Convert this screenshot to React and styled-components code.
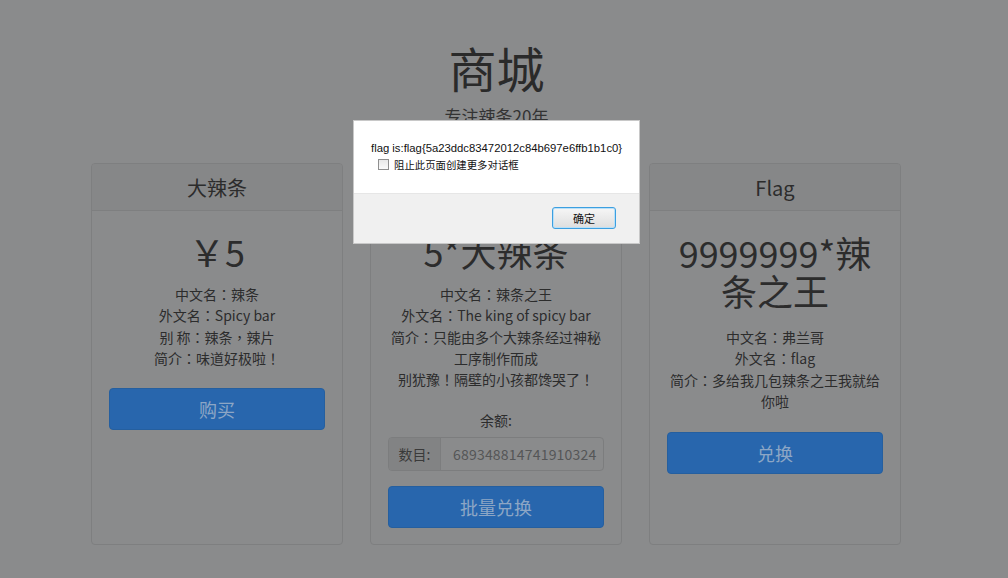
import React from "react";
import styled, { createGlobalStyle } from "styled-components";

const Global = createGlobalStyle`
  html, body { margin: 0; padding: 0; }
  body {
    background: #8a8b8c;
    width: 1008px;
    height: 578px;
    overflow: hidden;
    font-family: "Noto Sans CJK SC", "Noto Sans", sans-serif;
    color: #2c2c2c;
  }
`;

const Page = styled.div`
  position: relative;
  width: 1008px;
  height: 578px;
`;

const Container = styled.div`
  width: 811px;
  margin-left: 91px;
  display: flex;
  flex-direction: column;
  align-items: center;
`;

const Title = styled.h1`
  margin: 41px 0 0;
  font-size: 48px;
  font-weight: 400;
  line-height: 53px;
  color: #2a2a2a;
`;

const Subtitle = styled.p`
  margin: 11px 0 0;
  font-size: 17px;
  line-height: 22px;
  color: #333;
`;

const Grid = styled.div`
  width: 100%;
  margin-top: 36px;
  display: grid;
  grid-template-columns: repeat(3, 252px);
  column-gap: 27px;
`;

const Card = styled.div`
  height: 382px;
  box-sizing: border-box;
  border: 1px solid #7e7f80;
  border-radius: 4px;
  display: flex;
  flex-direction: column;
  overflow: hidden;
`;

const CardHeader = styled.div`
  height: 47px;
  box-sizing: border-box;
  border-bottom: 1px solid #7e7f80;
  background: #868788;
  display: flex;
  align-items: center;
  justify-content: center;
  font-size: 20px;
  color: #2c2c2c;
`;

const CardBody = styled.div`
  padding: 0 17px;
  display: flex;
  flex-direction: column;
  align-items: stretch;
  text-align: center;
`;

const Price = styled.div`
  margin: ${(p) => p.$top || 20}px 0 ${(p) => p.$bottom || 13}px;
  font-size: 36px;
  line-height: ${(p) => p.$lh || 40}px;
  color: #2c2c2c;
`;

const Info = styled.div`
  font-size: 14px;
  line-height: 21.3px;
  color: #2c2c2c;
`;

const P = styled.span`
  font-family: "Noto Sans CJK TC", "Noto Sans CJK SC", sans-serif;
`;

const Balance = styled.div`
  margin-top: 20px;
  font-size: 14px;
  line-height: 21px;
  color: #2c2c2c;
`;

const InputGroup = styled.div`
  margin-top: 6px;
  height: 34px;
  box-sizing: border-box;
  display: flex;
  border: 1px solid #7c7d7e;
  border-radius: 4px;
  overflow: hidden;
  font-size: 14px;
`;

const Addon = styled.div`
  width: 51px;
  flex: none;
  background: #828384;
  border-right: 1px solid #7c7d7e;
  display: flex;
  align-items: center;
  justify-content: center;
  color: #3a3a3a;
`;

const InputValue = styled.div`
  flex: 1;
  display: flex;
  align-items: center;
  padding-left: 12px;
  color: #555657;
  letter-spacing: 0.2px;
`;

const Button = styled.div`
  margin-top: ${(p) => p.$top}px;
  height: 42px;
  border-radius: 4px;
  background: #2866ad;
  border: 1px solid #255f9f;
  box-sizing: border-box;
  display: flex;
  align-items: center;
  justify-content: center;
  font-size: 18px;
  color: #8da6c5;
`;

const Dialog = styled.div`
  position: absolute;
  left: 353px;
  top: 120px;
  width: 287px;
  height: 124px;
  box-sizing: border-box;
  border: 1px solid #c8c8c8;
  background: #f0f0f0;
  display: flex;
  flex-direction: column;
  font-family: "Liberation Sans", "Noto Sans CJK SC", sans-serif;
`;

const DialogTop = styled.div`
  height: 72px;
  background: #ffffff;
  padding: 20px 0 0 17px;
  box-sizing: border-box;
`;

const Message = styled.div`
  font-size: 11.3px;
  line-height: 14px;
  color: #111;
`;

const CheckRow = styled.div`
  margin-top: 2px;
  margin-left: 7px;
  display: flex;
  align-items: center;
  gap: 5px;
  font-size: 10.4px;
  color: #111;
  font-family: "Noto Sans CJK SC", sans-serif;
`;

const Box = styled.span`
  width: 9px;
  height: 9px;
  border: 1px solid #8f8f8f;
  background: linear-gradient(#e8e8e8, #fafafa);
  display: inline-block;
`;

const DialogBottom = styled.div`
  flex: 1;
  display: flex;
  justify-content: flex-end;
  align-items: flex-start;
  padding: 13px 23px 0 0;
  border-top: 1px solid #e6e6e6;
`;

const OkButton = styled.div`
  width: 64px;
  height: 22px;
  box-sizing: border-box;
  border: 1px solid #3c9fe0;
  border-radius: 3px;
  background: linear-gradient(#f6f6f6, #dedede);
  box-shadow: inset 0 0 0 1px #b9e0f8;
  display: flex;
  align-items: center;
  justify-content: center;
  font-family: "Noto Sans CJK SC", sans-serif;
  font-size: 11px;
  color: #111;
`;

export default function App() {
  return (
    <Page>
      <Global />
      <Container>
        <Title>商城</Title>
        <Subtitle>专注辣条20年</Subtitle>
        <Grid>
          <Card>
            <CardHeader>大辣条</CardHeader>
            <CardBody>
              <Price>￥5</Price>
              <Info>
                中文名<P>：</P>辣条<br />
                外文名<P>：</P>Spicy bar<br />
                别 称<P>：</P>辣条<P>，</P>辣片<br />
                简介<P>：</P>味道好极啦<P>！</P>
              </Info>
              <Button $top={19}>购买</Button>
            </CardBody>
          </Card>
          <Card>
            <CardHeader>辣条之王</CardHeader>
            <CardBody>
              <Price>5*大辣条</Price>
              <Info>
                中文名<P>：</P>辣条之王<br />
                外文名<P>：</P>The king of spicy bar<br />
                简介<P>：</P>只能由多个大辣条经过神秘工序制作而成<br />
                别犹豫<P>！</P>隔壁的小孩都馋哭了<P>！</P>
              </Info>
              <Balance>余额:</Balance>
              <InputGroup>
                <Addon>数目:</Addon>
                <InputValue>689348814741910324</InputValue>
              </InputGroup>
              <Button $top={15}>批量兑换</Button>
            </CardBody>
          </Card>
          <Card>
            <CardHeader>Flag</CardHeader>
            <CardBody>
              <Price $top={22} $bottom={18} $lh={38}>9999999*辣条之王</Price>
              <Info>
                中文名<P>：</P>弗兰哥<br />
                外文名<P>：</P>flag<br />
                简介<P>：</P>多给我几包辣条之王我就给你啦
              </Info>
              <Button $top={20}>兑换</Button>
            </CardBody>
          </Card>
        </Grid>
      </Container>
      <Dialog>
        <DialogTop>
          <Message>flag is:flag{"{"}5a23ddc83472012c84b697e6ffb1b1c0{"}"}</Message>
          <CheckRow>
            <Box />
            阻止此页面创建更多对话框
          </CheckRow>
        </DialogTop>
        <DialogBottom>
          <OkButton>确定</OkButton>
        </DialogBottom>
      </Dialog>
    </Page>
  );
}
